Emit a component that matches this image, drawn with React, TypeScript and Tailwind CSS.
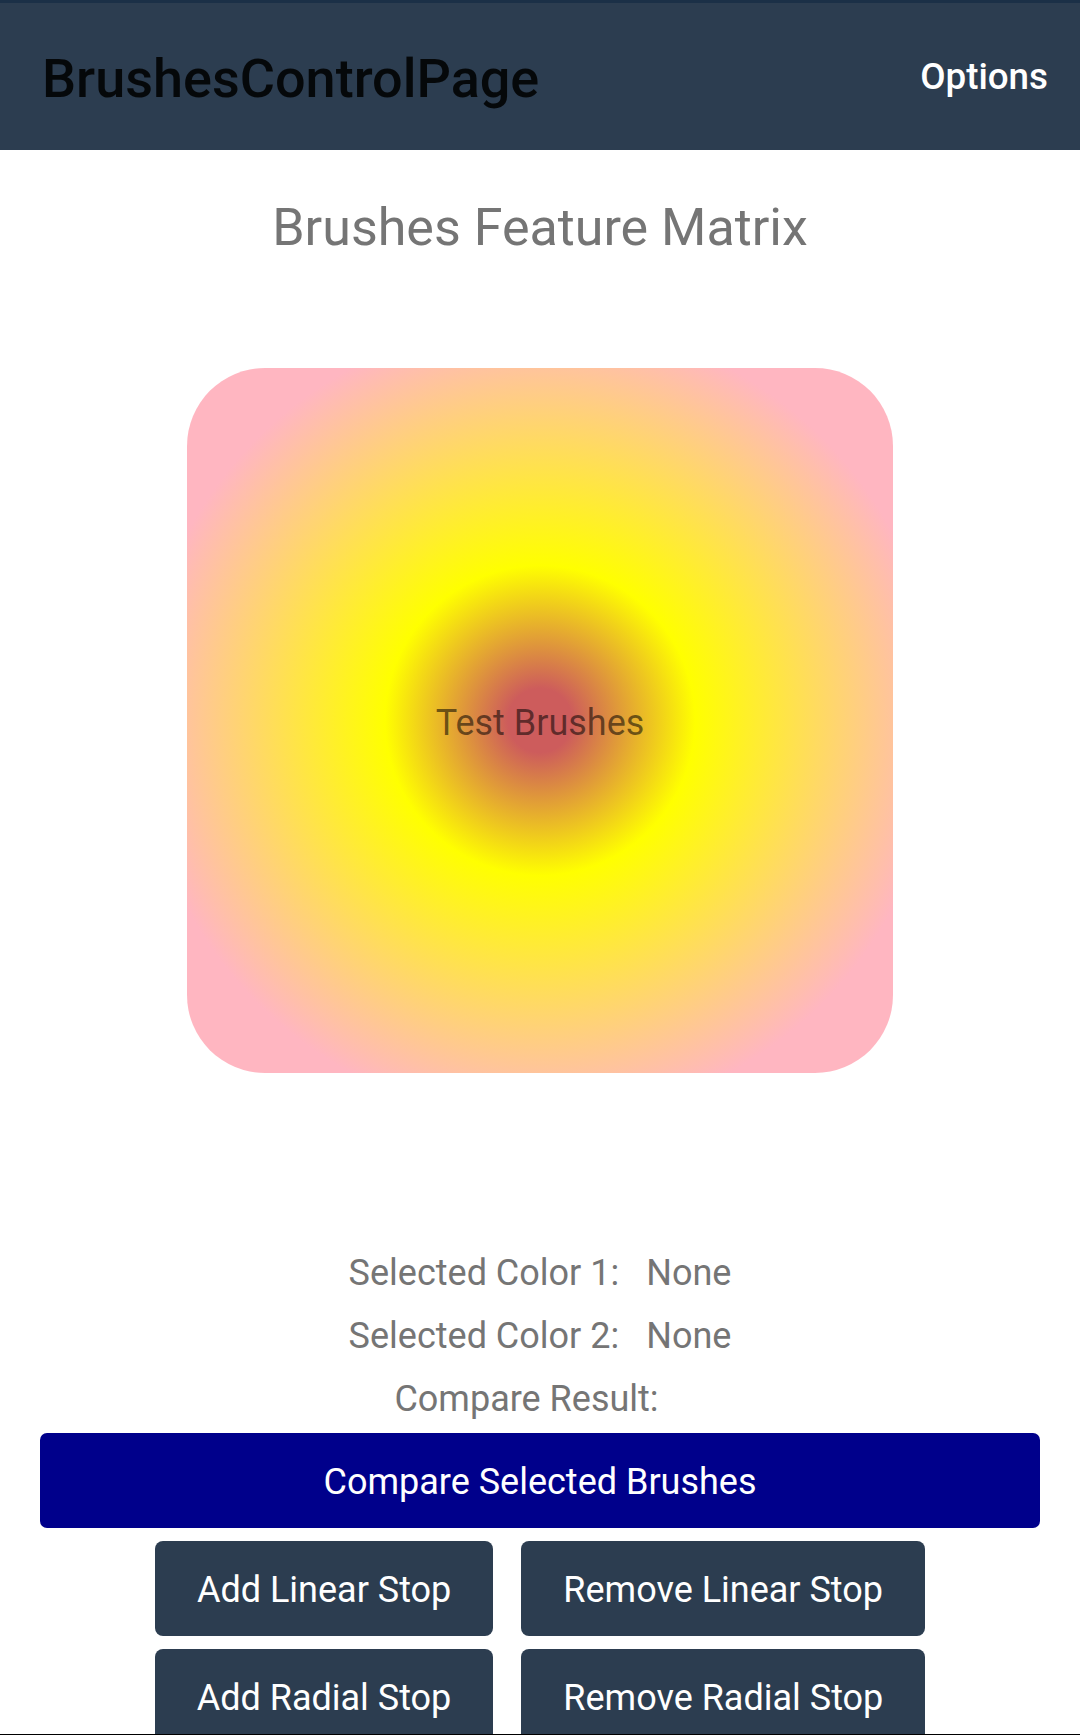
export default function App() {
  return (
    <div className="flex h-[1735px] w-[1080px] flex-col overflow-hidden bg-white font-['Roboto',sans-serif]">
      <div className="h-[3px] bg-[#1b3047]" />
      <header className="flex h-[147px] items-center justify-between bg-[#2c3d50] pl-[42px] pr-[32px]">
        <h1 className="mt-[5px] text-[54px] font-medium leading-[62px] text-black/[0.87]">
          BrushesControlPage
        </h1>
        <span className="text-[36.75px] font-medium leading-[42px] text-white">Options</span>
      </header>

      <main className="flex flex-1 flex-col items-center overflow-hidden">
        <h2 className="mt-[47px] text-[52px] leading-[62px] text-[#757575]">
          Brushes Feature Matrix
        </h2>

        <div className="mt-[109px] flex h-[705px] w-[706px] shrink-0 items-center justify-center rounded-[78px] bg-[radial-gradient(circle_at_center,#cd5c5c_0px,#cd5c5c_32px,#ffff00_155px,#ffb6c1_400px)]">
          <span className="pt-[5px] text-[36px] leading-[43px] text-black/[0.54]">Test Brushes</span>
        </div>

        <div className="mt-[179px] flex flex-col items-center gap-[20px] text-[36px] leading-[43px] text-[#757575]">
          <div className="flex gap-[27px]">
            <span>Selected Color 1:</span>
            <span>None</span>
          </div>
          <div className="flex gap-[27px]">
            <span>Selected Color 2:</span>
            <span>None</span>
          </div>
          <div className="flex gap-[27px]">
            <span>Compare Result:</span>
            <span></span>
          </div>
        </div>

        <div className="mt-[12px] w-full px-[40px]">
          <button className="flex h-[95px] w-full items-center justify-center rounded-[7px] bg-[#00008b] pt-[4px] text-[36px] leading-[43px] text-white">
            Compare Selected Brushes
          </button>
        </div>

        <div className="mt-[13px] flex gap-[28px]">
          <StopButton label="Add Linear Stop" />
          <StopButton label="Remove Linear Stop" />
        </div>
        <div className="mt-[13px] flex gap-[28px]">
          <StopButton label="Add Radial Stop" />
          <StopButton label="Remove Radial Stop" />
        </div>
      </main>
      <div className="h-px shrink-0 bg-black" />
    </div>
  );
}

function StopButton({ label }: { label: string }) {
  return (
    <button className="flex h-[95px] shrink-0 items-center justify-center rounded-[8px] bg-[#2c3d50] px-[42px] pt-[4px] text-[36px] leading-[43px] text-white">
      {label}
    </button>
  );
}
